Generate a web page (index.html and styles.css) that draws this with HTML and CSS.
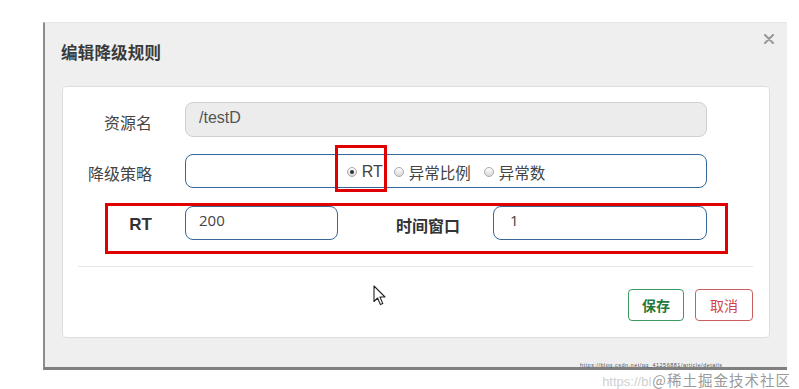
FILE: index.html
```html
<!DOCTYPE html>
<html lang="zh-CN">
<head>
<meta charset="utf-8">
<title>编辑降级规则</title>
<link rel="stylesheet" href="styles.css">
</head>
<body>
<div class="dialog">
  <div class="header">
    <h4 class="title">编辑降级规则</h4>
    <span class="close"><svg width="10" height="10" viewBox="0 0 10 10"><path d="M1 1 L9 9 M9 1 L1 9" stroke="#9a9a9a" stroke-width="2.2" stroke-linecap="round"/></svg></span>
  </div>
  <div class="panel">
    <div class="row row1">
      <label class="label">资源名</label>
      <div class="input disabled">/testD</div>
    </div>
    <div class="row row2">
      <label class="label">降级策略</label>
      <div class="input active radios">
        <span class="radio checked"></span><span class="rtext rt">RT</span>
        <span class="radio"></span><span class="rtext">异常比例</span>
        <span class="radio"></span><span class="rtext">异常数</span>
      </div>
      <span class="mark mark-radio"></span>
    </div>
    <div class="row row3">
      <label class="label bold">RT</label>
      <div class="input active small">200</div>
      <label class="label2 bold">时间窗口</label>
      <div class="input active medium">1</div>
      <span class="mark mark-row"></span>
    </div>
    <div class="divider"></div>
    <div class="footer">
      <button class="btn save">保存</button>
      <button class="btn cancel">取消</button>
    </div>
    <svg class="cursor" width="13" height="21" viewBox="0 0 13 21"><path d="M1 1 L1 16.5 L4.6 13 L7.4 19.6 L9.8 18.6 L7 12 L12 12 Z" fill="#fff" stroke="#222" stroke-width="1.1" stroke-linejoin="round"/></svg>
  </div>
</div>
<div class="watermark">
  <span class="wm-url">https://blog.csdn.net/qq_41256881/article/details</span>
  <span class="wm-main"><span class="wm-faint">https://bl</span>@稀土掘金技术社区</span>
</div>
</body>
</html>
```

FILE: styles.css
```css
html, body {
  margin: 0;
  padding: 0;
  background: #ffffff;
}
body {
  padding: 22px 0 0 43px;
  font-family: "Liberation Sans", "Noto Sans CJK SC", sans-serif;
  color: #333;
  position: relative;
  width: 799px;
  height: 389px;
  box-sizing: border-box;
}
.dialog {
  width: 744px;
  height: 348px;
  box-sizing: border-box;
  background: #efefef;
  border-left: 2px solid #8c8c8c;
  border-bottom: 3px solid #808080;
  border-top: 1px solid #e6e6e6;
  display: flex;
  flex-direction: column;
}
.header {
  height: 63px;
  display: flex;
  align-items: center;
  padding: 0 13px 5px 16px;
  box-sizing: border-box;
}
.title {
  margin: 0;
  font-size: 16.5px;
  font-weight: bold;
  color: #3a3a3a;
  font-family: "Noto Sans CJK SC", sans-serif;
  letter-spacing: 0.2px;
}
.close {
  margin-left: auto;
  align-self: flex-start;
  margin-top: 11px;
  width: 10px;
  height: 10px;
  display: flex;
}
.panel {
  position: relative;
  margin: 0 17px 0 17px;
  width: 708px;
  height: 252px;
  box-sizing: border-box;
  background: #ffffff;
  border: 1px solid #dedede;
  border-radius: 4px;
  padding: 15px 62px 0 0;
  display: flex;
  flex-direction: column;
}
.row {
  position: relative;
  display: flex;
  align-items: center;
}
.row1 { height: 35px; }
.row2 { height: 34px; margin-top: 17px; }
.row3 { height: 34px; margin-top: 18px; }
.label, .label2 {
  text-align: right;
  font-size: 16px;
  color: #444;
  font-family: "Noto Sans CJK SC", sans-serif;
  line-height: 20px;
  padding-top: 4px;
}
.label { width: 89px; margin-right: 33px; flex: none; }
.label2 { width: 122px; margin-right: 33px; flex: none; }
.bold { font-weight: bold; color: #333; }
.row3 .label.bold { font-family: "Liberation Sans", sans-serif; font-size: 17px; }
.input {
  box-sizing: border-box;
  height: 100%;
  flex: 1;
  border-radius: 8px;
  display: flex;
  align-items: center;
  padding: 0 13px 4px;
  font-size: 15px;
  color: #444;
}
.disabled {
  background: #ececec;
  border: 1px solid #cfcfcf;
  color: #555;
  font-size: 16px;
}
.active {
  background: #ffffff;
  border: 1.5px solid #35679a;
}
.small { flex: none; width: 153px; font-family: "Open Sans", sans-serif; font-size: 15px; padding-bottom: 6px; }
.medium { flex: none; width: 214px; font-family: "Open Sans", sans-serif; font-size: 15px; padding-left: 16px; padding-bottom: 6px; }
.radios {
  justify-content: center;
  padding: 2px 0 0;
}
.radio {
  width: 10px;
  height: 10px;
  border-radius: 50%;
  border: 1px solid #a9a9a9;
  background: linear-gradient(#ffffff, #d8d8d8);
  box-sizing: border-box;
  position: relative;
  margin-right: 5px;
  flex: none;
}
.radio.checked::after {
  content: "";
  position: absolute;
  left: 2px;
  top: 2px;
  width: 4px;
  height: 4px;
  border-radius: 50%;
  background: #333;
}
.rtext {
  font-size: 15.5px;
  color: #444;
  font-family: "Noto Sans CJK SC", sans-serif;
  margin-right: 13px;
}
.rtext.rt {
  font-family: "Liberation Sans", sans-serif;
  font-size: 16px;
  margin-right: 11px;
}
.rtext:last-child { margin-right: 0; }
.mark {
  position: absolute;
  border: 3px solid #e00000;
  box-sizing: border-box;
  pointer-events: none;
}
.mark-radio {
  left: 272px;
  top: -9px;
  width: 52px;
  height: 47px;
}
.mark-row {
  left: 42px;
  top: -3px;
  width: 623px;
  height: 51px;
}
.divider {
  margin: 26px -46px 0 15px;
  height: 1px;
  background: #e6e6e6;
}
.footer {
  display: flex;
  justify-content: flex-end;
  gap: 11px;
  margin: 22px -46px 0 0;
}
.btn {
  height: 32px;
  background: #fff;
  border-radius: 4px;
  font-size: 14px;
  font-family: "Noto Sans CJK SC", sans-serif;
  padding: 0;
  cursor: pointer;
}
.save {
  width: 56px;
  border: 1px solid #3c9a61;
  color: #1f7a3c;
  font-weight: bold;
}
.cancel {
  width: 58px;
  border: 1px solid #c9605e;
  color: #d0454a;
}
.cursor {
  position: absolute;
  left: 310px;
  top: 198px;
}
.watermark {
  position: absolute;
  left: 580px;
  top: 364px;
  width: 219px;
  height: 23px;
  pointer-events: none;
}
.wm-url {
  position: absolute;
  left: 0;
  top: -2px;
  font-size: 5.5px;
  line-height: 6px;
  color: #555;
  white-space: nowrap;
  letter-spacing: 0.5px;
}
.wm-main {
  position: absolute;
  right: 8px;
  top: 8px;
  font-size: 14.5px;
  letter-spacing: 1px;
  color: #9a9a9a;
  font-family: "Noto Sans CJK SC", sans-serif;
  white-space: nowrap;
  line-height: 15px;
}
.wm-faint {
  color: #d0d0d0;
  font-family: "Liberation Sans", sans-serif;
  font-size: 13px;
  letter-spacing: 0;
  margin-right: 1px;
}
```
